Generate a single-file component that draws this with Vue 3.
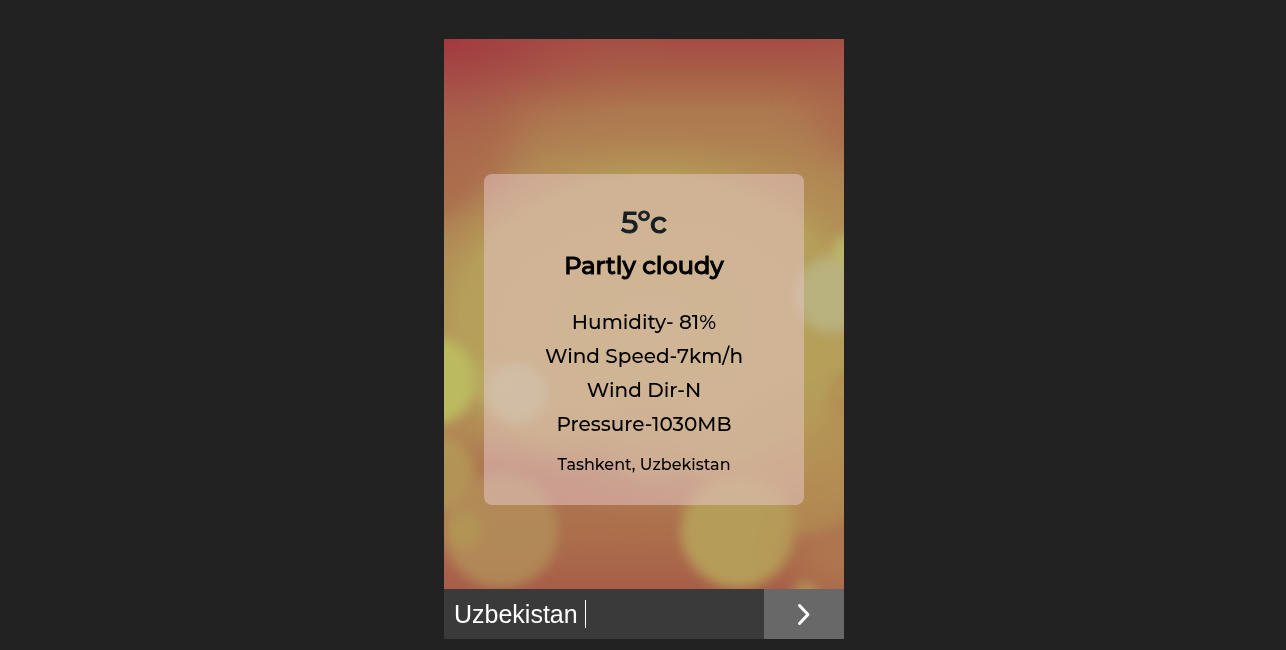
<script setup>
import { ref } from 'vue'

const query = ref('Uzbekistan ')
const temperature = '5ºc'
const condition = 'Partly cloudy'
const details = ['Humidity- 81%', 'Wind Speed-7km/h', 'Wind Dir-N', 'Pressure-1030MB']
const place = 'Tashkent, Uzbekistan'
</script>

<template>
  <main class="page">
    <section class="weather">
      <svg class="backdrop" viewBox="0 0 400 550" preserveAspectRatio="xMidYMid slice" aria-hidden="true">
        <defs>
          <linearGradient id="base" x1="0" y1="0" x2="0" y2="1">
            <stop offset="0" stop-color="#a44c42" />
            <stop offset="0.07" stop-color="#a86248" />
            <stop offset="0.13" stop-color="#ad784f" />
            <stop offset="0.25" stop-color="#b18954" />
            <stop offset="0.6" stop-color="#b3935a" />
            <stop offset="0.82" stop-color="#b07a50" />
            <stop offset="0.92" stop-color="#ab6c4b" />
            <stop offset="1" stop-color="#a85d49" />
          </linearGradient>
          <radialGradient id="corner">
            <stop offset="0" stop-color="#a2383f" />
            <stop offset="0.35" stop-color="#a34144" stop-opacity="0.6" />
            <stop offset="0.7" stop-color="#a65548" stop-opacity="0.25" />
            <stop offset="1" stop-color="#a96549" stop-opacity="0" />
          </radialGradient>
          <radialGradient id="glow">
            <stop offset="0" stop-color="#b7a55c" />
            <stop offset="0.75" stop-color="#b5a059" stop-opacity="0.9" />
            <stop offset="0.87" stop-color="#b39457" stop-opacity="0.45" />
            <stop offset="1" stop-color="#b18c56" stop-opacity="0" />
          </radialGradient>
          <filter id="soft" x="-40%" y="-40%" width="180%" height="180%" color-interpolation-filters="sRGB">
            <feGaussianBlur stdDeviation="6" />
          </filter>
          <filter id="wide" x="-100%" y="-150%" width="300%" height="400%" color-interpolation-filters="sRGB">
            <feGaussianBlur stdDeviation="20" />
          </filter>
        </defs>
        <rect width="400" height="550" fill="url(#base)" />
        <ellipse cx="-20" cy="90" rx="90" ry="100" fill="#a8604a" opacity="0.7" filter="url(#wide)" />
        <ellipse cx="425" cy="50" rx="60" ry="80" fill="#a8604a" opacity="0.6" filter="url(#wide)" />
        <ellipse cx="0" cy="0" rx="230" ry="120" fill="url(#corner)" />
        <ellipse cx="400" cy="0" rx="110" ry="70" fill="url(#corner)" opacity="0.2" />
        <ellipse cx="210" cy="285" rx="260" ry="194" fill="url(#glow)" />
        <ellipse cx="120" cy="442" rx="140" ry="26" fill="#a96c50" opacity="0.7" filter="url(#wide)" />
        <ellipse cx="400" cy="370" rx="14" ry="34" fill="#b18250" opacity="0.8" filter="url(#soft)" />
        <g filter="url(#soft)">
          <circle cx="-12" cy="342" r="44" fill="#bcba60" />
          <circle cx="45" cy="340" r="22" fill="#b8ad67" opacity="0.4" />
          <circle cx="73" cy="354" r="30" fill="#b9b986" opacity="0.75" />
          <circle cx="388" cy="256" r="38" fill="#b9b17e" />
          <circle cx="407" cy="213" r="18" fill="#bcb66b" />
          <circle cx="-8" cy="434" r="38" fill="#b59b58" opacity="0.8" />
          <circle cx="57" cy="492" r="57" fill="#b3905a" opacity="0.8" />
          <circle cx="19" cy="491" r="18" fill="#b49a56" opacity="0.7" />
          <circle cx="205" cy="400" r="42" fill="#b59a5a" opacity="0.5" />
          <circle cx="360" cy="425" r="70" fill="#b59a57" opacity="0.6" />
          <circle cx="294" cy="492" r="57" fill="#b69c59" />
          <circle cx="362" cy="556" r="13" fill="#b69b57" />
          <circle cx="398" cy="352" r="9" fill="#b69b57" />
        </g>
        <ellipse cx="400" cy="520" rx="50" ry="36" fill="#b07d51" opacity="0.8" filter="url(#wide)" />
      </svg>
      <div class="content">
        <article class="card">
          <h1 class="temperature">{{ temperature }}</h1>
          <h2 class="condition">{{ condition }}</h2>
          <ul class="details">
            <li v-for="item in details" :key="item">{{ item }}</li>
          </ul>
          <p class="place">{{ place }}</p>
        </article>
      </div>
      <form class="search" @submit.prevent>
        <div class="field">
          <input v-model="query" type="text" aria-label="City or country" />
          <span class="caret"></span>
        </div>
        <button type="submit" aria-label="Search">
          <svg width="16" height="24" viewBox="0 0 16 24" aria-hidden="true">
            <path d="M3.5 3.5 12 12.5 3.5 21.5" fill="none" stroke="#fff" stroke-width="3" stroke-linecap="round" stroke-linejoin="round" />
          </svg>
        </button>
      </form>
    </section>
  </main>
</template>

<style>
body {
  margin: 0;
  background: #222;
}
</style>

<style scoped>
.page {
  display: flex;
  justify-content: center;
  box-sizing: border-box;
  min-height: 100vh;
  padding: 39px 0 11px 2px;
  background: #222;
  font-family: Montserrat, Inter, "Open Sans", sans-serif;
  color: #000;
}
.weather {
  position: relative;
  display: flex;
  flex-direction: column;
  width: 100%;
  max-width: 400px;
  overflow: hidden;
}
.backdrop {
  position: absolute;
  inset: 0 0 50px;
  width: 100%;
  height: calc(100% - 50px);
}
.content {
  position: relative;
  flex: 1;
  padding: 135px 40px 84px;
}
.card {
  padding: 30px 20px;
  border-radius: 8px;
  background: rgba(233, 200, 208, 0.5);
  text-align: center;
}
.temperature,
.condition,
.details,
.place {
  margin: 0;
  padding: 0;
  font-weight: 500;
}
.temperature {
  font-size: 30px;
  line-height: 38px;
  color: #162023;
  -webkit-text-stroke: 1px #162023;
}
.condition {
  margin-top: 5px;
  font-size: 24px;
  line-height: 38px;
  -webkit-text-stroke: 1px #000;
}
.details {
  margin-top: 20px;
  list-style: none;
  font-size: 20px;
  line-height: 34px;
}
.place {
  margin-top: 14px;
  font-size: 16px;
  line-height: 20px;
}
.search {
  position: relative;
  display: flex;
  height: 50px;
}
.field {
  position: relative;
  flex: 4;
  min-width: 0;
}
.field input {
  box-sizing: border-box;
  width: 100%;
  height: 100%;
  padding: 0 10px;
  border: 0;
  outline: 0;
  background: #3a3a3a;
  color: #fff;
  font: 25px "Liberation Sans", Arial, sans-serif;
}
.caret {
  position: absolute;
  top: 11px;
  left: 141px;
  width: 1px;
  height: 28px;
  background: #fff;
}
.search button {
  display: flex;
  flex: 1;
  align-items: center;
  justify-content: center;
  padding: 0;
  border: 0;
  background: #686868;
  cursor: pointer;
}
</style>
